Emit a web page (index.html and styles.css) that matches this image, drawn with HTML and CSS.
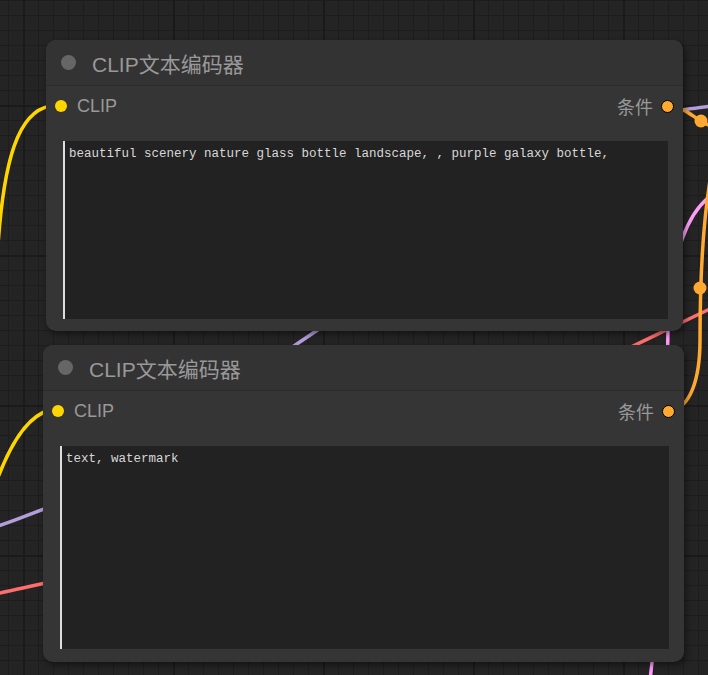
FILE: index.html
```html
<!DOCTYPE html>
<html lang="zh">
<head>
  <meta charset="UTF-8">
  <title>CLIP文本编码器</title>
  <link rel="stylesheet" href="styles.css">
</head>
<body>
  <div class="canvas">
    <svg class="links" width="708" height="675" viewBox="0 0 708 675">
      <g fill="none" stroke-width="3.5" stroke-linecap="round">
        <path stroke="#ffd500" d="M50,106 C18,112 4,160 -2,245"/>
        <path stroke="#ffd500" d="M50,410 C30,415 12,440 -3,480"/>
        <path stroke="#b39ddb" d="M-5,527 C15,521 35,512 60,503"/>
        <path stroke="#ff6e6e" d="M-5,594 C15,590 35,585 60,580"/>
        <path stroke="#b39ddb" d="M285,352 L325,325"/>
        <path stroke="#ff6e6e" d="M600,362 C640,343 680,323 712,308"/>
        <path stroke="#ff9cf9" d="M712,195 C690,210 670,250 668,330 C666,450 660,600 650,680"/>
        <path stroke="#b39ddb" d="M675,111 C690,109 700,107 712,106"/>
        <path stroke="#ffa931" d="M670,106 C685,108 692,116 701,121 C706,124 710,126 715,128"/>
        <path stroke="#ffa931" d="M670,411 C690,408 700,380 700,340 C700,280 702,230 710,180"/>
      </g>
      <g fill="#ffa931">
        <circle cx="701" cy="121" r="6.5"/>
        <circle cx="700" cy="288" r="6.5"/>
      </g>
    </svg>

    <div class="node node-pos">
      <div class="node-title">
        <span class="title-dot"></span>
        <span class="title-text">CLIP文本编码器</span>
      </div>
      <div class="slots">
        <div class="slot slot-in"><span class="slot-dot clip"></span>CLIP</div>
        <div class="slot slot-out">条件<span class="slot-dot cond"></span></div>
      </div>
      <textarea class="prompt" readonly>beautiful scenery nature glass bottle landscape, , purple galaxy bottle,</textarea>
    </div>

    <div class="node node-neg">
      <div class="node-title">
        <span class="title-dot"></span>
        <span class="title-text">CLIP文本编码器</span>
      </div>
      <div class="slots">
        <div class="slot slot-in"><span class="slot-dot clip"></span>CLIP</div>
        <div class="slot slot-out">条件<span class="slot-dot cond"></span></div>
      </div>
      <textarea class="prompt" readonly>text, watermark</textarea>
    </div>
  </div>
</body>
</html>
```

FILE: styles.css
```css
body { margin: 0; background: #232323; font-family: "Liberation Sans", "Noto Sans CJK SC", sans-serif; }

.canvas {
  position: relative;
  width: 708px;
  height: 675px;
  overflow: hidden;
  background-color: #242424;
  background-image:
    linear-gradient(90deg, #1a1a1a 2px, transparent 2px),
    linear-gradient(#1a1a1a 2px, transparent 2px),
    linear-gradient(90deg, #1d1d1d 1px, transparent 1px),
    linear-gradient(#1d1d1d 1px, transparent 1px);
  background-size: 150px 150px, 150px 150px, 15px 15px, 15px 15px;
  background-position: 23px 0, 0 105px, 8px 0, 0 0;
}

.links { position: absolute; left: 0; top: 0; }

/* nodes sit on the free canvas */
.node {
  position: absolute;
  display: flex;
  flex-direction: column;
  background: #353535;
  border-radius: 10px;
  box-shadow: 2px 3px 6px rgba(0,0,0,0.45);
}
.node-pos { left: 46px; top: 40px; width: 637px; height: 291px; }
.node-neg { left: 43px; top: 345px; width: 641px; height: 317px; }

.node-title {
  height: 45px;
  display: flex;
  align-items: center;
  border-bottom: 1px solid #2b2b2b;
  border-radius: 10px 10px 0 0;
  background: #333;
}
.title-dot { width: 15px; height: 15px; border-radius: 50%; background: #666; margin-left: 15px; }
.title-text { margin-left: 16px; font-size: 21px; color: #999; }

.slots { height: 40px; display: flex; justify-content: space-between; align-items: center; }
.slot { display: flex; align-items: center; font-size: 18px; color: #999; }
.slot-dot { width: 12px; height: 12px; border-radius: 50%; box-sizing: border-box; }
.slot-dot.clip { background: #ffd500; margin: 0 10px 0 9px; }
.slot-dot.cond { width: 13px; height: 13px; background: #ffa931; border: 1px solid #000; margin: 0 9px 0 8px; }

.prompt {
  flex: 1;
  margin: 15px 15px 12px 17px;
  padding: 5px 4px 3px;
  background: #222;
  color: #d8d8d8;
  border: none;
  border-left: 2px solid #ddd;
  font-family: "Liberation Mono", monospace;
  font-size: 12.5px;
  line-height: 16px;
  resize: none;
  outline: none;
}
.node-neg .prompt { margin-bottom: 13px; }
```
